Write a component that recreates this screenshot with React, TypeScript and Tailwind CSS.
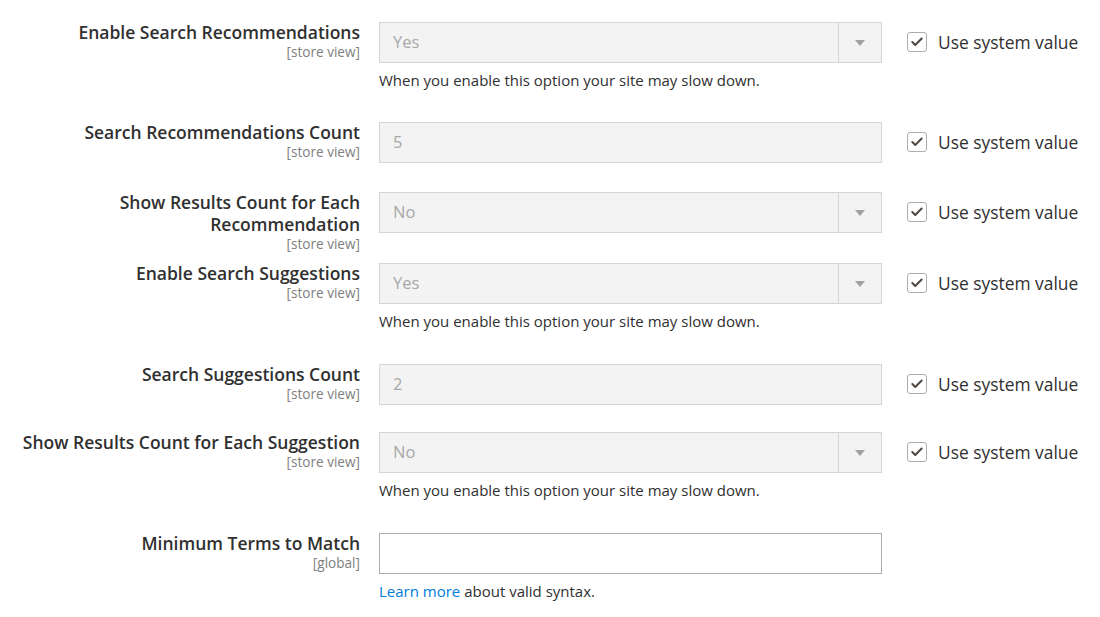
import { Check } from 'lucide-react';

type Field = {
  label: string[];
  scope: string;
  kind: 'select' | 'text' | 'input';
  value: string;
  note?: React.ReactNode;
  system?: boolean;
  height: string;
};

const slowNote = 'When you enable this option your site may slow down.';

const fields: Field[] = [
  { label: ['Enable Search Recommendations'], scope: '[store view]', kind: 'select', value: 'Yes', note: slowNote, system: true, height: 'h-[100px]' },
  { label: ['Search Recommendations Count'], scope: '[store view]', kind: 'text', value: '5', system: true, height: 'h-[70px]' },
  { label: ['Show Results Count for Each', 'Recommendation'], scope: '[store view]', kind: 'select', value: 'No', system: true, height: 'h-[71px]' },
  { label: ['Enable Search Suggestions'], scope: '[store view]', kind: 'select', value: 'Yes', note: slowNote, system: true, height: 'h-[101px]' },
  { label: ['Search Suggestions Count'], scope: '[store view]', kind: 'text', value: '2', system: true, height: 'h-[68px]' },
  { label: ['Show Results Count for Each Suggestion'], scope: '[store view]', kind: 'select', value: 'No', note: slowNote, system: true, height: 'h-[101px]' },
  {
    label: ['Minimum Terms to Match'],
    scope: '[global]',
    kind: 'input',
    value: '',
    note: (
      <>
        <a href="#" className="text-[#007bdb]">Learn more</a> about valid syntax.
      </>
    ),
    height: 'h-[100px]',
  },
];

function Control({ field }: { field: Field }) {
  if (field.kind === 'select') {
    return (
      <div className="flex h-[41px] border border-[#d5d5d5] bg-[#f3f3f3]">
        <div className="flex flex-1 items-center pl-[13px] text-[16.5px] text-[#a8a8a8]">{field.value}</div>
        <div className="flex w-[43px] items-center justify-center border-l border-[#d5d5d5]">
          <span className="h-0 w-0 border-x-[5px] border-t-[6px] border-x-transparent border-t-[#a0a0a0]" />
        </div>
      </div>
    );
  }
  if (field.kind === 'text') {
    return (
      <div className="flex h-[41px] items-center border border-[#d5d5d5] bg-[#f3f3f3] pl-[13px] text-[16.5px] text-[#a8a8a8]">
        {field.value}
      </div>
    );
  }
  return <div className="h-[41px] border border-[#adadad] bg-white" />;
}

export default function App() {
  return (
    <div className="min-h-[617px] bg-white pt-[22px] font-['Open_Sans',sans-serif] text-[#303030]">
      {fields.map((f) => (
        <div key={f.label.join(' ')} className={`flex items-start ${f.height}`}>
          <div className="-mt-px w-[360px] text-right">
            {f.label.map((line) => (
              <div key={line} className="text-[17.5px] leading-[22px] font-semibold">
                {line}
              </div>
            ))}
            <div className="mt-px text-[13.6px] leading-[16px] text-[#808080]">{f.scope}</div>
          </div>
          <div className="ml-[19px] w-[503px]">
            <Control field={f} />
            {f.note && <div className="mt-[7px] text-[15px] leading-[20px]">{f.note}</div>}
          </div>
          {f.system && (
            <label className="ml-[25px] mt-[10px] flex items-center gap-[11px] text-[17.4px] leading-[20px]">
              <span className="flex h-[20px] w-[20px] items-center justify-center rounded-[3px] border border-[#adadad] bg-white">
                <Check size={14} strokeWidth={3.5} className="text-[#514943]" />
              </span>
              Use system value
            </label>
          )}
        </div>
      ))}
    </div>
  );
}
